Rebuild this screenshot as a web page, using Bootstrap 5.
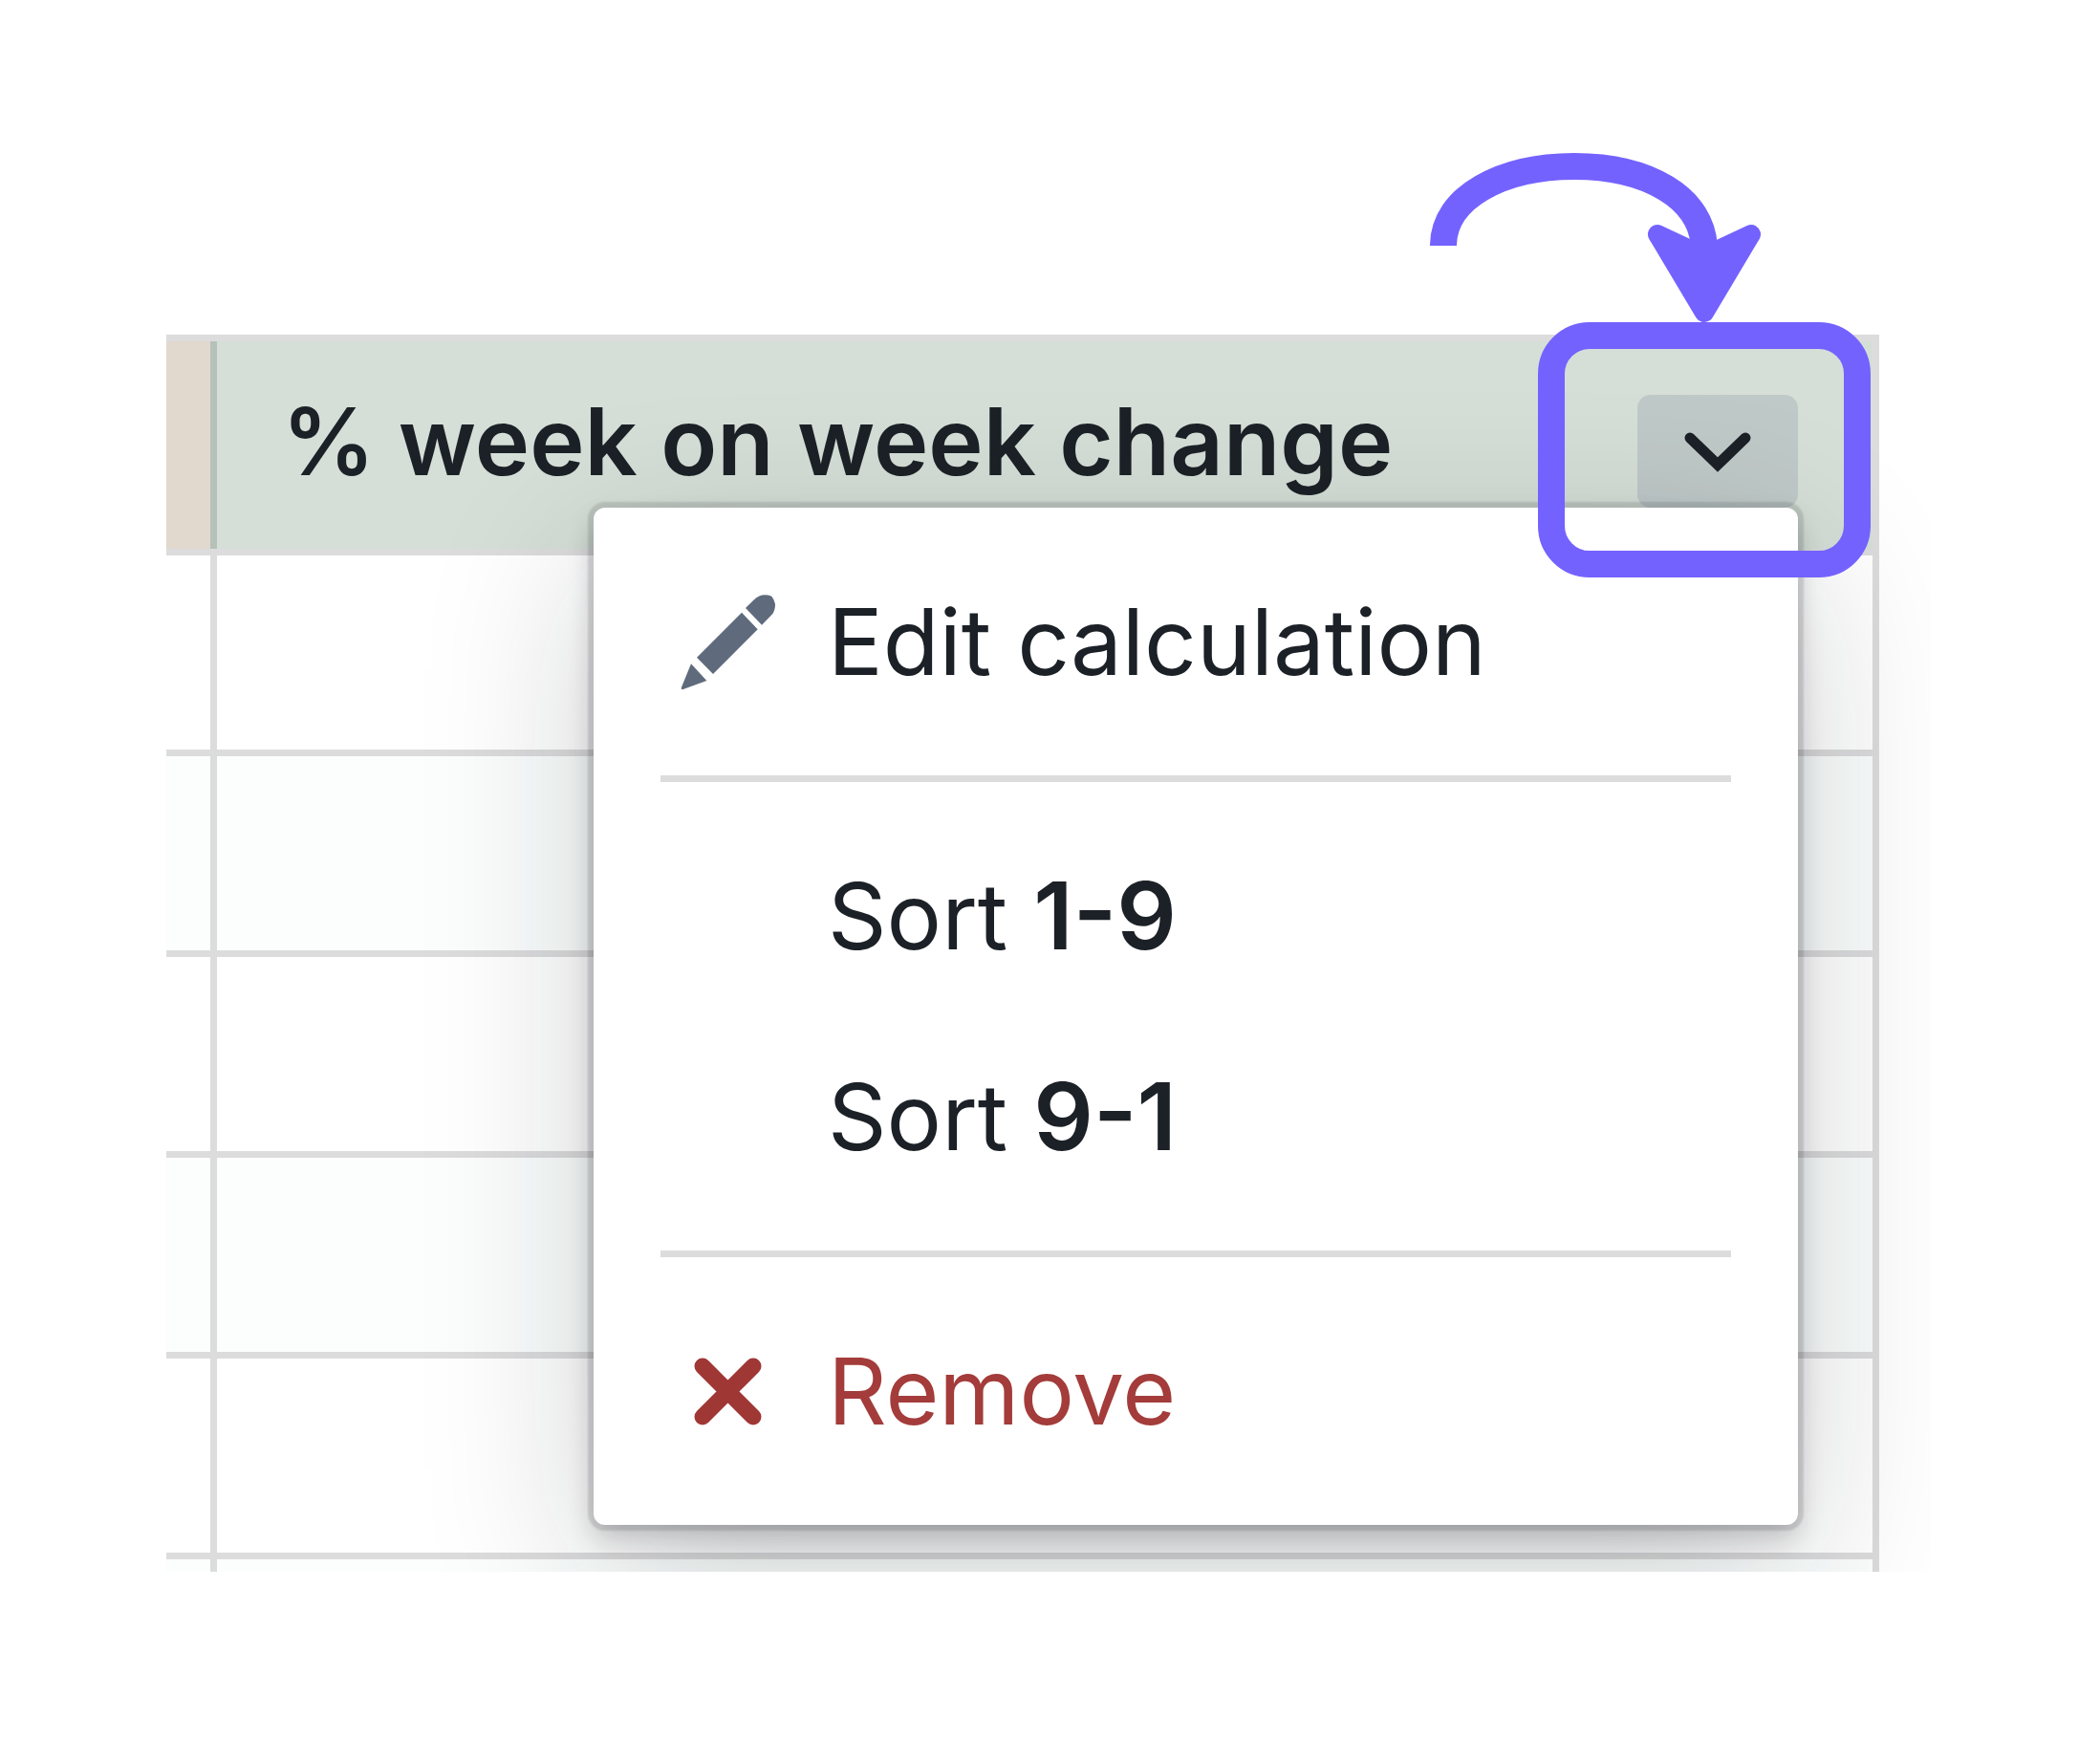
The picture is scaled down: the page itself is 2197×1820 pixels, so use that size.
<!DOCTYPE html>
<html lang="en">
<head>
<meta charset="utf-8">
<meta name="viewport" content="width=device-width, initial-scale=1">
<title>Column menu</title>
<link href="https://cdn.jsdelivr.net/npm/bootstrap@5.3.0/dist/css/bootstrap.min.css" rel="stylesheet">
<style>
  :root { --line: #dcdcdd; --ink: #1c2127; --accent: #7462ff; }
  body { font-family: Inter, "Liberation Sans", sans-serif; font-size: 96px; line-height: 98px; color: var(--ink); font-optical-sizing: none; background: #fff; }
  .stage { padding: 350px 177px 0 174px; }
  .sheet-clip { padding-right: 54px; }
  .sheet { width: 100%; table-layout: fixed; border-collapse: separate; border-spacing: 0; }
  .sheet th, .sheet td { padding: 0; border: 0 solid var(--line); border-right-width: 7px; border-bottom-width: 7px; }
  .sheet td { height: 210px; }
  .sheet th { height: 231px; border-top-width: 7px; font-weight: 600; vertical-align: top; }
  .sheet .edge-col { width: 53px; }
  .sheet tbody tr:nth-child(even) td, .sheet tbody tr:last-child td { background: #fbfefd; }
  .sheet tbody tr:last-child td { height: 13px; border-bottom-width: 0; }
  .sheet .head-prev { background: #e1d8ce; border-right-width: 0; }
  .sheet .head-change { background: #d5dfd7; }
  .head-inner { height: 217px; padding: 56px 78px 0 68px; border-left: 7px solid #b5c1b9; margin-left: -7px; background: #d5dfd7; }
  .head-title { font-size: 97px; }
  .toggle-btn { width: 168px; height: 118px; padding: 0; border: 0; border-radius: 14px; background: #bfc9c8; }
  .toggle-btn svg { width: 112px; height: 112px; }
  .column-menu.dropdown-menu { top: 174px; right: 78px; width: 1260px; padding: 35px; border: 0; border-radius: 12px; font-size: inherit; background: #fff;
    box-shadow: 0 0 2px 6px rgba(17,20,24,.12), 0 14px 28px rgba(17,20,24,.2), 0 56px 182px rgba(17,20,24,.2); }
  .column-menu .dropdown-item { height: 210px; padding: 0 49px; gap: 49px; color: var(--ink); font-weight: 400; border-radius: 14px; }
  .column-menu .remove-item { color: #a33c3a; }
  .column-menu .dropdown-divider { margin: 35px; border-top: 7px solid var(--line); opacity: 1; }
  .column-menu b { font-weight: 600; font-size: 98px; }
  .item-icon { width: 112px; height: 112px; flex: none; }
  .highlight { top: 337px; right: 240px; width: 348px; height: 267px; border: 28px solid var(--accent); border-radius: 54px; z-index: 1100; pointer-events: none; }
  .pointer-arrow { top: 150px; right: 343px; width: 364px; height: 190px; z-index: 1100; }
</style>
</head>
<body>
<main class="stage position-relative">
  <div class="sheet-clip overflow-hidden">
    <table class="sheet">
      <colgroup><col class="edge-col"><col></colgroup>
      <thead>
        <tr>
          <th class="head-prev" aria-label="Previous column"></th>
          <th class="head-change" scope="col">
            <div class="head-inner position-relative d-flex align-items-start justify-content-between">
              <span class="head-title text-nowrap">% week on week change</span>
              <button type="button" class="toggle-btn d-flex align-items-center justify-content-center" aria-label="Column options" aria-expanded="true">
                <svg viewBox="0 0 112 112" fill="none" stroke="#1c2127" stroke-width="11" stroke-linecap="round" aria-hidden="true"><path d="M27 42L56 70L85 42"/></svg>
              </button>
              <ul class="column-menu dropdown-menu show">
                <li><button type="button" class="dropdown-item d-flex align-items-center">
                  <svg class="item-icon" viewBox="0 0 336 336" fill="#5f6b7c" aria-hidden="true">
                    <path d="M225 63L250 38Q268 22 285 22Q297 22 307 26Q315 36 318 50Q318 72 308 83L276 116Z"/>
                    <path d="M72 218L213 77L263 130L123 270Z"/>
                    <path d="M54 238L103 291L29 318Q21 319 24 311Z"/>
                  </svg><span>Edit calculation</span></button></li>
                <li><hr class="dropdown-divider"></li>
                <li><button type="button" class="dropdown-item d-flex align-items-center"><span class="item-icon"></span><span>Sort <b>1-9</b></span></button></li>
                <li><button type="button" class="dropdown-item d-flex align-items-center"><span class="item-icon"></span><span>Sort <b>9-1</b></span></button></li>
                <li><hr class="dropdown-divider"></li>
                <li><button type="button" class="dropdown-item remove-item d-flex align-items-center">
                  <svg class="item-icon" viewBox="0 0 112 112" stroke="#9f3735" stroke-width="17" stroke-linecap="round" aria-hidden="true"><path d="M30 30L83 83M83 30L30 83"/></svg>
                  <span>Remove</span></button></li>
              </ul>
            </div>
          </th>
        </tr>
      </thead>
      <tbody>
        <tr><td></td><td></td></tr>
        <tr><td></td><td></td></tr>
        <tr><td></td><td></td></tr>
        <tr><td></td><td></td></tr>
        <tr><td></td><td></td></tr>
        <tr><td></td><td></td></tr>
      </tbody>
    </table>
  </div>
  <div class="highlight position-absolute"></div>
  <svg class="pointer-arrow position-absolute" viewBox="1490 150 364 190" aria-hidden="true">
    <path d="M1510 257C1510 206 1572 174 1647 174S1783 206 1783 262" fill="none" stroke="#7462ff" stroke-width="28"/>
    <path d="M1734 245L1783 327L1832 245L1783 268Z" fill="#7462ff" stroke="#7462ff" stroke-width="20" stroke-linejoin="round"/>
  </svg>
</main>
<script src="https://cdn.jsdelivr.net/npm/bootstrap@5.3.0/dist/js/bootstrap.bundle.min.js"></script>
</body>
</html>
